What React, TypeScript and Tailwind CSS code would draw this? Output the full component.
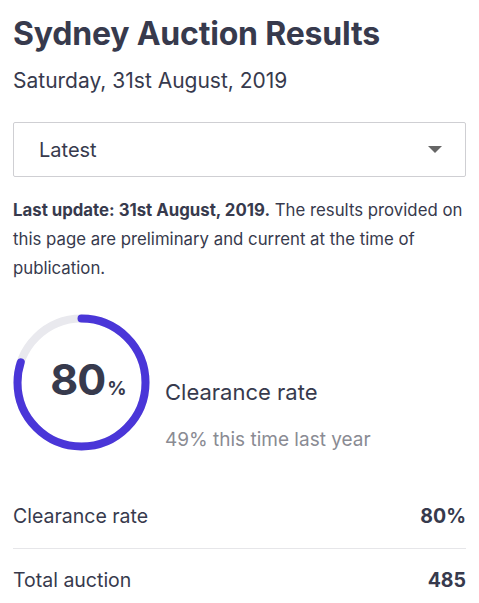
import React from 'react';

const FONT = { fontFamily: 'Inter, "Noto Sans", sans-serif' };

const ProgressRing: React.FC<{ value: number }> = ({ value }) => {
  const r = 64;
  const c = 2 * Math.PI * r;
  return (
    <div className="relative w-[137px] h-[137px] shrink-0">
      <svg width="137" height="137" viewBox="0 0 137 137" className="-rotate-90">
        <circle cx="68.5" cy="68.5" r={r} fill="none" stroke="#e9e9ee" strokeWidth="8" />
        <circle
          cx="68.5"
          cy="68.5"
          r={r}
          fill="none"
          stroke="#4a36d8"
          strokeWidth="8"
          strokeLinecap="round"
          strokeDasharray={`${(c * value) / 100} ${c}`}
        />
      </svg>
      <div className="absolute inset-0 flex items-center justify-center pl-[14px] pb-[6px]">
        <div className="flex items-baseline">
          <span className="text-[43px] font-bold leading-none tracking-[-1px] text-[#373a4d]">{value}</span>
          <span className="ml-[2px] text-[19px] font-bold leading-none text-[#373a4d]">%</span>
        </div>
      </div>
    </div>
  );
};

const StatRow: React.FC<{ label: string; value: string; border?: boolean }> = ({ label, value, border }) => (
  <div className={`flex items-center justify-between h-[64px] ${border ? 'border-b border-[#e6e6e9]' : ''}`}>
    <span className="text-[19.5px] text-[#373a4d]">{label}</span>
    <span className="text-[19.5px] font-bold text-[#373a4d]">{value}</span>
  </div>
);

export default function App() {
  return (
    <div className="min-h-screen bg-white px-[13px] pt-[12px]" style={FONT}>
      <h1 className="text-[32px] font-bold leading-[44px] text-[#373a4d] tracking-[-0.2px]">Sydney Auction Results</h1>
      <p className="mt-[11px] text-[21px] leading-[28px] text-[#373a4d]">Saturday, 31st August, 2019</p>

      <div className="mt-[27px] h-[55px] border border-[#cfcfd3] rounded-[2px] flex items-center justify-between pl-[25px] pr-[23px]">
        <span className="text-[20px] text-[#373a4d]">Latest</span>
        <svg width="14" height="7" viewBox="0 0 14 7">
          <path d="M0 0 L14 0 L7 7 Z" fill="#666" />
        </svg>
      </div>

      <p className="mt-[19px] text-[16.8px] leading-[29px] text-[#373a4d]">
        <span className="font-bold">Last update: 31st August, 2019.</span> The results provided on this page are
        preliminary and current at the time of publication.
      </p>

      <div className="mt-[31px] flex items-start gap-[15px]">
        <ProgressRing value={80} />
        <div className="pt-[63px]">
          <div className="text-[22px] leading-[30px] text-[#373a4d]">Clearance rate</div>
          <div className="mt-[21px] text-[19px] leading-[24px] text-[#8a8b93]">49% this time last year</div>
        </div>
      </div>

      <div className="mt-[33px]">
        <StatRow label="Clearance rate" value="80%" border />
        <StatRow label="Total auction" value="485" />
      </div>
    </div>
  );
}
